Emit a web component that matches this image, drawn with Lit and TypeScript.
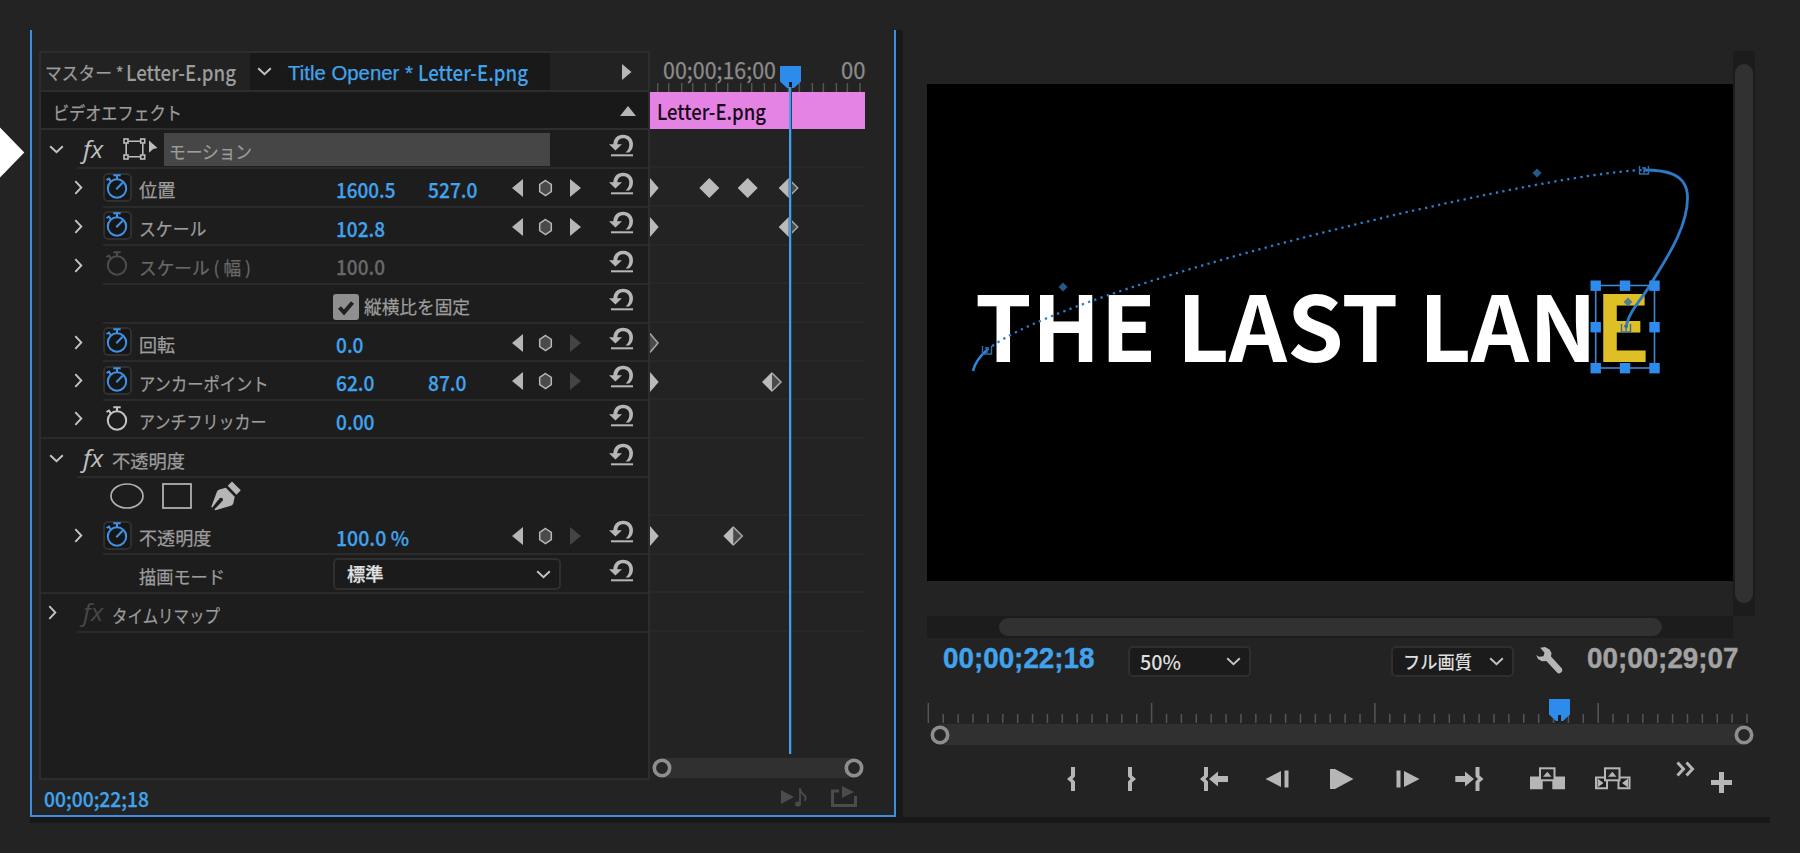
import { LitElement, html, svg, css, nothing } from "lit";
import { customElement, property, state } from "lit/decorators.js";
import { classMap } from "lit/directives/class-map.js";

/** A run of text stretched or squeezed horizontally to a set width. */
@customElement("fit-text")
class FitText extends LitElement {
  @property({ type: Number }) w = 0;
  @property() text = "";
  @state() private ratio = 1;
  static styles = css`
    :host { display: block; white-space: pre; flex: none; }
    .box { display: block; }
    .run { display: inline-block; transform-origin: 0 50%; }
  `;
  firstUpdated() {
    const run = this.renderRoot.querySelector(".run") as HTMLElement;
    const natural = run.getBoundingClientRect().width;
    if (natural && this.w) this.ratio = this.w / natural;
  }
  render() {
    return html`<div class="box" style="width:${this.w}px"><span class="run" style="transform:scaleX(${this.ratio})">${this.text}</span></div>`;
  }
}

const t = (text: string, w: number, cls = "") => html`<fit-text class=${cls} .text=${text} .w=${w}></fit-text>`;

/* ---------- icons ---------- */
const chevronDown = html`<svg class="chev" width="15" height="9" viewBox="0 0 15 9"><path d="M1.2 1.3 7.5 7.3 13.8 1.3" fill="none" stroke="#c4c4c4" stroke-width="1.900"/></svg>`;
const chevronRight = html`<svg width="9" height="15" viewBox="0 0 9 15"><path d="M1.3 1.2 7.3 7.5 1.3 13.8" fill="none" stroke="#c4c4c4" stroke-width="1.900"/></svg>`;
const resetIcon = html`<svg class="reset" width="25" height="23" viewBox="0 0 25 23">
  <path d="M0 10.2H13L6.4 16.4Z" fill="#b6b6b6"/>
  <path d="M4.3 11C4.3 4.6 8.2.7 14 .7 20 .7 24 4.600 24 10.300 24 14.200 22.300 16.800 20 18.600H16.500C18.800 16.800 20.300 14 20.300 10.500 20.300 6.800 17.800 4.300 14.200 4.300 10.500 4.300 8.300 6.900 8.300 11Z" fill="#b6b6b6"/>
  <rect x="2" y="20.300" width="22" height="2" fill="#b6b6b6"/></svg>`;
const stopwatch = (color: string, hand: boolean) => html`<svg width="29" height="29" viewBox="0 0 29 29">
  <g fill="none" stroke=${color} stroke-width="2">
    <circle cx="14" cy="15.500" r="9.200"/>
    <path d="M10.300 2.200H17.700M14 2.500V6M5.600 5.200 7.800 8.300M3.500 7 6.800 5"/>
    ${hand ? svg`<path d="M13.300 16.200 19.600 9.800"/>` : nothing}
  </g></svg>`;
const keyNav = (next: boolean) => html`<svg class="nav" width="70" height="20" viewBox="0 0 70 20">
  <path d="M11 1V19L0 10Z" fill="#b6b6b6"/>
  <path d="M33.500 2.500 39.300 6.500V13.500L33.500 17.500 27.700 13.500V6.500Z" fill="#4a4a4a" stroke="#b6b6b6" stroke-width="1.500"/>
  <path d="M58 1V19L69 10Z" fill=${next ? "#b6b6b6" : "#444"}/></svg>`;
const motionIcon = html`<svg width="36" height="22" viewBox="0 0 36 22">
  <g fill="none" stroke="#bdbdbd" stroke-width="1.600">
    <path d="M5.500 3.200H17.500M5.500 18.800H17.500M3.200 5.500V16.500M19.800 5.500V16.500"/>
    <rect x="1" y="1" width="4" height="4"/><rect x="17.700" y="1" width="4" height="4"/>
    <rect x="1" y="17" width="4" height="4"/><rect x="17.700" y="17" width="4" height="4"/></g>
  <path d="M26 2.500 34.500 10 30.200 11 26 14.800Z" fill="#bdbdbd"/></svg>`;
const ellipseIcon = html`<svg width="34" height="26" viewBox="0 0 34 26"><ellipse cx="17" cy="13" rx="16" ry="12" fill="none" stroke="#b0b0b0" stroke-width="1.700"/></svg>`;
const rectIcon = html`<svg width="30" height="26" viewBox="0 0 30 26"><rect x="1" y="1" width="28" height="24" fill="none" stroke="#b0b0b0" stroke-width="1.800"/></svg>`;
const penIcon = html`<svg width="31" height="30" viewBox="0 0 31 30">
  <path d="M21 .5 29.800 9.200 25.500 13.700 16.700 4.700ZM14.800 6.700 23.700 15.700 22.300 22.500Q21.500 24.500 19 25L4.500 29.300 3.300 28.600 10.500 21 7.500 18.500 1.200 26.800.3 25.800 6 10.500Q6.500 9 8.500 8.500Z" fill="#b6b6b6"/>
  <circle cx="10" cy="18.800" r="2" fill="#1d1d1d"/><path d="M2 27.500 9 19.500" stroke="#1d1d1d" stroke-width="1.300"/></svg>`;
const playhead = html`<svg class="head" width="21" height="22" viewBox="0 0 21 22"><path d="M0 0H21V15.500L14 22H7L0 15.500Z" fill="#2d8ceb"/><path d="M10.500 16V22" stroke="#1c1c1c" stroke-width="3"/></svg>`;
const wrench = html`<svg class="wrench" width="27" height="27" viewBox="0 0 27 27"><path d="M.3 8 3 9.800 7.500 9.300 8.500 5.800 4.200.8 9 0 13.500 2.500 15.500 6 15 9.500 26 21.500Q27 24 25 25.500 23 27 21.500 26L10.300 14 6 14.300 2 12Z" fill="#b6b6b6"/></svg>`;
const knob = html`<svg class="knob" width="20" height="20" viewBox="0 0 20 20"><circle cx="10" cy="10" r="7.700" fill="#262626" stroke="#8e8e8e" stroke-width="3.600"/></svg>`;

const I = "#b6b6b6";
const transport = [
  html`<svg width="8" height="24"><path d="M4 0H8V9.500L5.500 12 8 14.500V24H4V15.500L0 12 4 8.500Z" fill=${I}/></svg>`,
  html`<svg width="9" height="24"><path d="M5 0H1V9.500L3.500 12 1 14.500V24H5V15.500L9 12 5 8.500Z" fill=${I}/></svg>`,
  html`<svg width="29" height="24"><path d="M4 0H8V9.500L5.500 12 8 14.500V24H4V15.500L0 12 4 8.500ZM9 12 18 4.500V9H28V15H18V19.500Z" fill=${I}/></svg>`,
  html`<svg width="24" height="24"><path d="M0.500 12 16 4V20ZM19.500 3.500H23.500V20.500H19.500Z" fill=${I}/></svg>`,
  html`<svg width="24" height="24"><path d="M0 2H5L23.500 12 5 22H0Z" fill=${I}/></svg>`,
  html`<svg width="24" height="24"><path d="M.5 3.500H4.500V20.500H.5ZM8 4V20L23.500 12Z" fill=${I}/></svg>`,
  html`<svg width="29" height="24"><path d="M24.500 0H20.500V9.500L23 12 20.500 14.500V24H24.500V15.500L28.500 12 24.500 8.500ZM19 12 10 4.500V9H.3V15H10V19.500Z" fill=${I}/></svg>`,
  html`<svg width="36" height="24"><path d="M0 9.500H12.700V22.200H0ZM22.300 9.500H35V22.200H22.300Z" fill=${I}/><rect x="10" y="1.300" width="14.500" height="12" fill="#232323" stroke=${I} stroke-width="2"/><path d="M13 9.800H21.500L17.300 4.800Z" fill=${I}/></svg>`,
  html`<svg width="36" height="24"><path d="M1 10.500H12V21.200H1ZM23.500 10.500H34.500V21.200H23.500Z" fill="#1b1b1b" stroke=${I} stroke-width="2"/><path d="M2.500 11.500 8.500 16 2.500 20.500ZM33 11.500 27 16 33 20.500Z" fill=${I}/><rect x="10" y="1.300" width="14.500" height="12" fill="#232323" stroke=${I} stroke-width="2"/><path d="M13 9.800H21.500L17.300 4.800Z" fill=${I}/></svg>`,
  html`<svg class="more" width="20" height="16"><path d="M1.500 1.500 7.500 8 1.500 14.500M10.500 1.500 16.500 8 10.500 14.500" fill="none" stroke=${I} stroke-width="3"/></svg>`,
  html`<svg class="plus" width="21" height="21"><path d="M8 0H13V8H21V13H13V21H8V13H0V8H8Z" fill=${I}/></svg>`,
];

/* ---------- data ---------- */
type Key = { x: number; kind: "start" | "startHollow" | "full" | "half" };
interface Prop {
  label: string; lw: number; values?: [string, number][]; watch?: "on" | "off" | "dim";
  nav?: "both" | "prev"; full?: boolean; dim?: boolean; check?: boolean; select?: boolean; keys?: Key[];
}
const motionProps: Prop[] = [
  { label: "位置", lw: 36.5, values: [["1600.5", 59.500], ["527.0", 49.500]], watch: "on", nav: "both",
    keys: [{ x: 0, kind: "start" }, { x: 59.300, kind: "full" }, { x: 97.700, kind: "full" }, { x: 138.700, kind: "half" }] },
  { label: "スケール", lw: 67.500, values: [["102.8", 49]], watch: "on", nav: "both", keys: [{ x: 0, kind: "start" }, { x: 138.700, kind: "half" }] },
  { label: "スケール ( 幅 )", lw: 112, values: [["100.0", 49]], watch: "dim", dim: true },
  { label: "", lw: 0, check: true },
  { label: "回転", lw: 36, values: [["0.0", 27.500]], watch: "on", nav: "prev", keys: [{ x: 0, kind: "startHollow" }] },
  { label: "アンカーポイント", lw: 129.500, values: [["62.0", 38.500], ["87.0", 38.500]], watch: "on", nav: "prev",
    keys: [{ x: 0, kind: "start" }, { x: 122, kind: "half" }] },
  { label: "アンチフリッカー", lw: 127.500, values: [["0.00", 38.500]], watch: "off", full: true },
];
const opacityProps: Prop[] = [
  { label: "不透明度", lw: 72.500, values: [["100.0 %", 73]], watch: "on", nav: "prev", keys: [{ x: 0, kind: "start" }, { x: 83.300, kind: "half" }] },
  { label: "描画モード", lw: 86, select: true, full: true },
];

const base = css`
  * { box-sizing: border-box; }
  svg { display: block; flex: none; }
`;

@customElement("effect-controls")
class EffectControls extends LitElement {
  static styles = [base, css`
    :host { display: flex; flex-direction: column; width: 866px; height: 787px; padding: 21px 28px 0 7px;
      border: 2px solid #3a8fe0; border-top: 0; background: #232323; color: #9c9c9c; font-size: 18px; -webkit-text-stroke: .25px; }
    .top { display: flex; height: 729px; }
    .table { width: 611px; border: 2px solid #2d2d2d; background: #1d1d1d; }
    .tabs { display: flex; align-items: center; height: 39px; border-bottom: 2px solid #2d2d2d; background: #222; }
    .master { display: flex; width: 209px; padding-left: 4px; gap: 2px; align-items: center; padding-top: 3px; }
    .latin { font-size: 22px; font-weight: 500; -webkit-text-stroke: 0; }
    .tabs .latin { margin-top: -3px; }
    .current { display: flex; align-items: center; width: 300px; height: 37px; background: #191919; color: #41a3ec; padding-left: 7px; }
    .current fit-text { padding-top: 3px; }
    .helv { font-family: "Liberation Sans", Arial, sans-serif; font-size: 19.500px; margin-left: 16px; margin-top: 2px; }
    .current .latin { margin-left: 5px; }
    .more { margin-left: 72px; }
    .video { display: flex; align-items: center; justify-content: space-between; height: 38.300px; padding: 0 12px 0 12px;
      border-bottom: 2px solid #2d2d2d; background: #191919; }
    .video fit-text { padding-top: 5px; }
    .video svg { margin-top: 2px; }
    .row { display: flex; height: 38.650px; }
    .gutter { flex: none; display: flex; align-items: center; width: 62px; padding: 0 0 1px 33px; }
    .gutter.fx { width: 36px; padding-left: 8px; }
    .gutter.side { padding-left: 7px; }
    .body { flex: 1; display: flex; align-items: center; }
    .body, .row.full .gutter { border-bottom: 2px solid #2a2a2a; }
    .body.open { border-color: transparent; }
    .fxmark { font: italic 24px/1 "Open Sans", sans-serif; color: #c0c0c0; margin-left: 6px; -webkit-text-stroke: 0; }
    .fxmark.off { color: #484848; }
    .grp { margin-left: 9px; padding-top: 7px; }
    .hot { display: flex; align-items: center; width: 386px; height: 33px; margin: 1px 0 0 5px; padding: 5px 0 0 5px; background: #464646; }
    .motion { margin-left: 20px; display: flex; padding-top: 1px; }
    .rst { margin-left: auto; margin-right: 14px; margin-bottom: 7px; }
    .watch { width: 29px; height: 29px; flex: none; }
    .watch.on { border-radius: 5px; box-shadow: inset 0 0 0 2px #303030; background: #161616; }
    .name { width: 197px; margin-left: 7px; padding-top: 6px; }
    .val { width: 91px; padding-top: 4px; font-size: 20.500px; font-weight: 500; color: #41a3ec; }
    .val + .val { padding-left: 1px; }
    .wide { width: 182px; }
    .dim .name, .dim .val { color: #686868; }
    .nav { margin-top: 2px; margin-left: -6px; }
    .check { display: flex; align-items: center; gap: 5px; padding-top: 8px; margin-left: -3px; }
    .tick { width: 26px; height: 26px; border-radius: 3px; background: #8f8f8f; }
    .select { display: flex; align-items: center; justify-content: space-between; width: 228px; height: 32px; margin: 1px 0 0 -3px;
      padding: 0 8px 0 12px; border: 2px solid #2f2f2f; border-radius: 5px; background: #1b1b1b; color: #e2e2e2; font-weight: 500; }
    .masks { display: flex; align-items: center; padding-left: 33px; gap: 18px; }
    .masks svg:last-child { margin-left: 1px; }
    .timeline { position: relative; width: 215px; }
    .scale { height: 41px; padding-top: 4px; display: flex; flex-direction: column; justify-content: space-between; }
    .codes { display: flex; justify-content: space-between; font-size: 23px; line-height: 28px; height: 28px; padding-left: 13px; color: #8b8b8b; }
    .clip { display: flex; align-items: center; height: 37px; padding: 0 0 0 7px; background: #e583e5; color: #160516; margin: -.500px 0 1.300px; }
    .lane { height: 38.650px; border-bottom: 2px solid #282828; padding-top: 10px; margin: 0; }
    .lane.none { border-color: transparent; }
    .needle { position: absolute; left: 139px; top: 36px; width: 3px; height: 667px; background: #4a9de4; border-right: 1px solid #17486f; }
    .head { position: absolute; left: 130px; top: 15px; }
    .zoom { position: absolute; left: 2px; right: 1px; bottom: 2px; height: 20px; margin: 0; display: flex; justify-content: space-between; 
      background: linear-gradient(#303030, #303030) 10px 0 / 192px 100% no-repeat; }
    .foot { display: flex; align-items: center; flex: 1; padding: 2px 9px 0 5px; font-size: 20.500px; font-weight: 500; color: #41a3ec; }
    .foot .a { margin-left: auto; margin-right: 22px; margin-top: -3px; }
    .foot .b { margin-top: -5px; }
  `];
  private diamond(k: Key) {
    const x = k.x;
    if (k.kind === "start") return svg`<path d="M0 0V20L8.700 10Z" fill="#bababa"/>`;
    if (k.kind === "startHollow") return svg`<path d="M0 .5 8 10 0 19.500" fill="#4a4a4a" stroke="#a8a8a8" stroke-width="1.500"/>`;
    if (k.kind === "full") return svg`<path d="M${x - 10} 10 ${x} 0 ${x + 10} 10 ${x} 20Z" fill="#bababa"/>`;
    return svg`<path d="M${x} 1 ${x + 9} 10 ${x} 19" fill="#4a4a4a" stroke="#a8a8a8" stroke-width="1.500"/><path d="M${x - 10} 10 ${x} 0V20Z" fill="#bababa"/>`;
  }
  private lane(keys?: Key[], none = false) {
    return html`<div class=${classMap({ lane: true, none })}>${keys ? html`<svg width="215" height="20">${keys.map((k) => this.diamond(k))}</svg>` : nothing}</div>`;
  }
  private row(p: Prop) {
    const v = p.values ?? [];
    return html`<div class=${classMap({ row: true, full: !!p.full, dim: !!p.dim })}>
      <div class="gutter">${p.watch ? chevronRight : nothing}</div>
      <div class="body">
        <div class=${classMap({ watch: true, on: p.watch === "on" })}>
          ${p.watch ? stopwatch({ on: "#3f93e6", off: "#c4c4c4", dim: "#4c4c4c" }[p.watch], p.watch === "on") : nothing}</div>
        <div class="name">${p.label ? t(p.label, p.lw) : nothing}</div>
        ${v.map(([s, w]) => html`<div class=${classMap({ val: true, wide: v.length === 1 })}>${t(s, w)}</div>`)}
        ${p.nav ? keyNav(p.nav === "both") : nothing}
        ${p.check ? html`<div class="check"><div class="tick"><svg width="26" height="26"><path d="M6.500 13.500 11 18.500 19.500 8.500" fill="none" stroke="#202020" stroke-width="4"/></svg></div>${t("縦横比を固定", 106)}</div>` : nothing}
        ${p.select ? html`<div class="select">${t("標準", 36.500)}${chevronDown}</div>` : nothing}
        <div class="rst">${resetIcon}</div>
      </div></div>`;
  }
  render() {
    const ticks = [653, 686, 725, 758, 796, 829, 863, 902, 935, 973, 1006, 1045, 1078, 1117, 1150, 1189, 1222, 1260].map((n) => n / 3 - 210);
    return html`
      <div class="top">
        <div class="table">
          <div class="tabs">
            <div class="master">${t("マスター *", 78.500)}${t("Letter-E.png", 110, "latin")}</div>
            <div class="current">${chevronDown}${t("Title Opener *", 125, "helv")}${t("Letter-E.png", 110, "latin")}</div>
            <svg class="more" width="10" height="16"><path d="M0 0V16L9.500 8Z" fill="#b6b6b6"/></svg>
          </div>
          <div class="video">${t("ビデオエフェクト", 129)}<svg width="16" height="10"><path d="M0 10H16L8 0Z" fill="#b6b6b6"/></svg></div>
          <div class="row"><div class="gutter fx">${chevronDown}</div>
            <div class="body">${t("fx", 20, "fxmark")}<div class="motion">${motionIcon}</div>
              <div class="hot">${t("モーション", 83)}</div><div class="rst">${resetIcon}</div></div></div>
          ${motionProps.map((p) => this.row(p))}
          <div class="row"><div class="gutter fx">${chevronDown}</div>
            <div class="body">${t("fx", 20, "fxmark")}${t("不透明度", 73, "grp")}<div class="rst">${resetIcon}</div></div></div>
          <div class="row"><div class="gutter fx"></div><div class="body open masks">${ellipseIcon}${rectIcon}${penIcon}</div></div>
          ${opacityProps.map((p) => this.row(p))}
          <div class="row"><div class="gutter fx side">${chevronRight}</div>
            <div class="body">${t("fx", 20, "fxmark off")}${t("タイムリマップ", 108, "grp")}</div></div>
        </div>
        <div class="timeline">
          <div class="scale"><div class="codes">${t("00;00;16;00", 113)}${t("00", 24.500)}</div>
            <svg width="215" height="9">${ticks.map((x) => svg`<rect x=${x - 0.7} width="1.500" height="9" fill="#555"/>`)}</svg></div>
          <div class="clip latin">${t("Letter-E.png", 109)}</div>
          ${this.lane()}${motionProps.map((p) => this.lane(p.keys))}
          ${this.lane(undefined, true)}${this.lane()}
          ${opacityProps.map((p) => this.lane(p.keys))}${this.lane()}
          ${playhead}<div class="needle"></div>
          <div class="zoom">${knob}${knob}</div>
        </div>
      </div>
      <div class="foot">${t("00;00;22;18", 105)}
        <svg class="a" width="28" height="19"><path d="M0 2V16L13 9Z" fill="#4b4b4b"/><path d="M19 0V15" stroke="#4b4b4b" stroke-width="1.800"/><path d="M19 1Q20 5 23 7 26 10 23.500 13" fill="none" stroke="#4b4b4b" stroke-width="1.800"/><ellipse cx="17" cy="16" rx="3" ry="2.500" fill="#4b4b4b"/></svg>
        <svg class="b" width="26" height="21"><path d="M8 5H1.500V19.500H24.500V10" fill="none" stroke="#4b4b4b" stroke-width="3"/><path d="M11 0V12L23 6Z" fill="#4b4b4b"/></svg>
      </div>`;
  }
}

@customElement("program-monitor")
class ProgramMonitor extends LitElement {
  static styles = [base, css`
    :host { display: block; width: 867px; height: 787px; padding-left: 24px; }
    .view { display: grid; grid-template-columns: 806px 22px; height: 608px; }
    .screen { position: relative; margin-top: 54px; height: 497px; background: #000; overflow: hidden; }
    .title { position: absolute; left: 48px; top: 188.500px; display: flex; font-size: 90.500px; line-height: 1.100; font-weight: 700; color: #fff; }
    .pick { position: absolute; left: 668px; top: 186.500px; font-size: 92px; line-height: 1.100; font-weight: 700; color: #dfbf26; }
    .path { position: absolute; left: 0; top: 0; }
    .htrack { margin-top: 35px; height: 22px; padding: 2px 71px 2px 72px; background: #1c1c1c; }
    .vtrack { margin-top: 21px; height: 565px; padding: 13px 2px; background: #1c1c1c; }
    .thumb { height: 100%; border-radius: 9px; background: #313131; }
    .bar { display: flex; align-items: center; height: 47px; padding: 0 17px 0 16px; }
    .code { font: bold 29px/1 "Liberation Sans", Arial, sans-serif; color: #41a3ec; margin-top: -7px; -webkit-text-stroke: .4px; }
    .code.total { color: #a3a3a3; margin-left: 24px; }
    .select { display: flex; align-items: center; justify-content: space-between; height: 31px; width: 123px; padding: 1px 8px 0 10px;
      border: 2px solid #2f2f2f; border-radius: 5px; background: #1b1b1b; color: #dedede; font-size: 18px; margin-left: 33px; font-weight: 500; }
    .num { font-size: 20px; }
    .chev { margin-top: -2px; }
    .select.q { margin-left: 140px; }
    .wrench { margin-left: 22px; margin-top: -2px; }
    .ruler { position: relative; height: 60px; padding-top: 18px; }
    .head { position: absolute; left: 622px; top: 14px; }
    .zoom { display: flex; justify-content: space-between; align-items: center; width: 827px; height: 21px; margin-top: 1px; padding-left: 3px;
      background: linear-gradient(#303030, #303030) 13px 0 / 803px 100% no-repeat; }
    .buttons { display: grid; grid-template-columns: 60px 73px 65px 65px 66px 59px 75px 65px 81px 35px 21px; align-items: center;
      height: 36px; padding-left: 140px; margin-top: 16px; }
    .more { margin-top: -20px; }
    .plus { margin-top: 7px; }
  `];
  render() {
    const handles = [[668.700, 201.500], [698, 201.500], [727.500, 201.500], [668.700, 243], [727.500, 243], [668.700, 284], [698, 284], [727.500, 284]];
    const nodes = [[60, 266], [717, 86], [699, 244]];
    const tangents = [[136, 203], [610, 89], [701, 218]];
    return html`
      <div class="view">
        <div>
          <div class="screen">
            <div class="title">${t("THE LAST LAN", 622)}</div>
            <div class="pick">${t("E", 56)}</div>
            <svg class="path" width="806" height="497" fill="none">
              <path d="M46 287C48 278 53 272 60 266" stroke="#2f86da" stroke-width="2.500"/>
              <path d="M60 266C136 203 610 89 717 86" stroke="#2c7dcb" stroke-width="2.300" stroke-dasharray="2.300 4.300"/>
              <path d="M717 86C738 86 760 89 760.500 113C761 144 737 178 725 198C717 213 701 227 699 244" stroke="#2c7bc8" stroke-width="2.800"/>
              <rect x="668.700" y="201.500" width="58.800" height="82.500" stroke="#3f87d2" stroke-width="1.600"/>
              ${handles.map(([x, y]) => svg`<rect x=${x - 5.2} y=${y - 5} width="10.400" height="10.400" fill="#2d8ceb"/>`)}
              ${nodes.map(([x, y]) => svg`<path d="M${x - 4.5} ${y - 4}v8h9v-8M${x - 2} ${y - 2}h4M${x} ${y - 3}v6" stroke="#2d6fae" stroke-width="1.400"/>`)}
              ${tangents.map(([x, y]) => svg`<path d="M${x - 4.500} ${y}l4.500 -4.500 4.500 4.500 -4.500 4.500z" fill="#2d6fae" fill-opacity=".8"/>`)}
            </svg>
          </div>
          <div class="htrack"><div class="thumb"></div></div>
        </div>
        <div class="vtrack"><div class="thumb"></div></div>
      </div>
      <div class="bar">
        ${t("00;00;22;18", 151.500, "code")}
        <div class="select">${t("50%", 41, "num")}${chevronDown}</div>
        <div class="select q">${t("フル画質", 69)}${chevronDown}</div>
        ${wrench}
        ${t("00;00;29;07", 151.500, "code total")}
      </div>
      <div class="ruler">
        <svg width="828" height="20">${Array.from({ length: 56 }, (_, i) => {
          const h = i % 15 === 0 ? 20 : 9;
          return svg`<rect x=${0.6 + i * 14.885} y=${20 - h} width="1.500" height=${h} fill="#555"/>`;
        })}</svg>
        ${playhead}
        <div class="zoom">${knob}${knob}</div>
      </div>
      <div class="buttons">${transport}</div>`;
  }
}

@customElement("app-root")
class AppRoot extends LitElement {
  static styles = [base, css`
    :host { display: block; position: relative; width: 1800px; height: 853px; padding: 30px 30px 0; background: #232323; overflow: hidden;
      font-family: "Noto Sans CJK JP", "Noto Sans", sans-serif; line-height: 1.200; }
    .panels { display: flex; width: 1740px; border-bottom: 6px solid #181818; }
    .split { width: 7px; background: #181818; }
    .notch { position: absolute; left: 0; top: 127px; }
  `];
  render() {
    return html`
      <svg class="notch" width="25" height="51"><path d="M0 .5 24.300 25.500 0 50.500Z" fill="#fff"/></svg>
      <div class="panels"><effect-controls></effect-controls><div class="split"></div><program-monitor></program-monitor></div>`;
  }
}
